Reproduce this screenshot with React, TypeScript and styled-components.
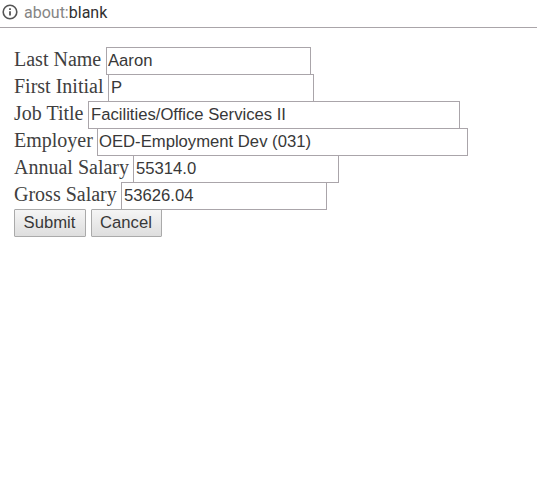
import React from "react";
import styled, { createGlobalStyle } from "styled-components";

const GlobalStyle = createGlobalStyle`
  body { margin: 0; background: #fff; overflow: hidden; }
`;

const AddressBar = styled.header`
  display: flex;
  align-items: center;
  box-sizing: border-box;
  height: 28px;
  padding: 0 0 2px 2px;
  gap: 6px;
  border-bottom: 1px solid #aaa5a9;
  font: 16px/26px Roboto, sans-serif;
  color: #858585;
`;

const InfoIcon = styled.svg`
  width: 16px;
  height: 16px;
  flex: none;
  margin-bottom: 1px;
`;

const Host = styled.span`
  color: #303030;
`;

const Form = styled.form`
  display: flex;
  flex-direction: column;
  padding: 19px 0 0 14px;
`;

const Row = styled.div`
  display: flex;
  height: 27px;
`;

const Label = styled.label<{ $width: number }>`
  width: ${(p) => p.$width}px;
  flex: none;
  white-space: nowrap;
  font: 20px/24px "Liberation Serif", serif;
  color: #404040;
`;

const Input = styled.input<{ $width: number; $inset?: number }>`
  box-sizing: border-box;
  width: ${(p) => p.$width}px;
  height: 28px;
  padding: 0 2px 1px ${(p) => p.$inset ?? 2}px;
  border: 1px solid #aaa5aa;
  border-radius: 0;
  outline: none;
  background: #fff;
  font: 16.67px "Liberation Sans", sans-serif;
  color: #383838;
`;

const Actions = styled.div`
  display: flex;
  gap: 5px;
`;

const Button = styled.button<{ $width: number }>`
  box-sizing: border-box;
  width: ${(p) => p.$width}px;
  height: 28px;
  padding: 0 1px 0 0;
  border: 1px solid #aaa;
  border-radius: 1px;
  background: linear-gradient(#f5f5f5, #dedede);
  font: 16.67px "Liberation Sans", sans-serif;
  color: #383838;
`;

const fields = [
  { label: "Last Name", value: "Aaron", offset: 92, width: 205, inset: 1 },
  { label: "First Initial", value: "P", offset: 94, width: 206 },
  { label: "Job Title", value: "Facilities/Office Services II", offset: 74, width: 372 },
  { label: "Employer", value: "OED-Employment Dev (031)", offset: 83, width: 371, inset: 1 },
  { label: "Annual Salary", value: "55314.0", offset: 119, width: 206 },
  { label: "Gross Salary", value: "53626.04", offset: 107, width: 206 },
];

export default function App() {
  return (
    <>
      <GlobalStyle />
      <AddressBar>
        <InfoIcon viewBox="0 0 16 16" fill="none" stroke="#555" strokeWidth="1.6">
          <circle cx="8" cy="8" r="6.8" />
          <path d="M8 7.2v4.3M8 4.2v1.7" strokeWidth="1.8" />
        </InfoIcon>
        <span>about:<Host>blank</Host></span>
      </AddressBar>
      <Form onSubmit={(e) => e.preventDefault()}>
        {fields.map((f) => (
          <Row key={f.label}>
            <Label $width={f.offset} htmlFor={f.label}>{f.label}</Label>
            <Input id={f.label} $width={f.width} $inset={f.inset} defaultValue={f.value} />
          </Row>
        ))}
        <Actions>
          <Button type="submit" $width={72}>Submit</Button>
          <Button type="button" $width={71}>Cancel</Button>
        </Actions>
      </Form>
    </>
  );
}
